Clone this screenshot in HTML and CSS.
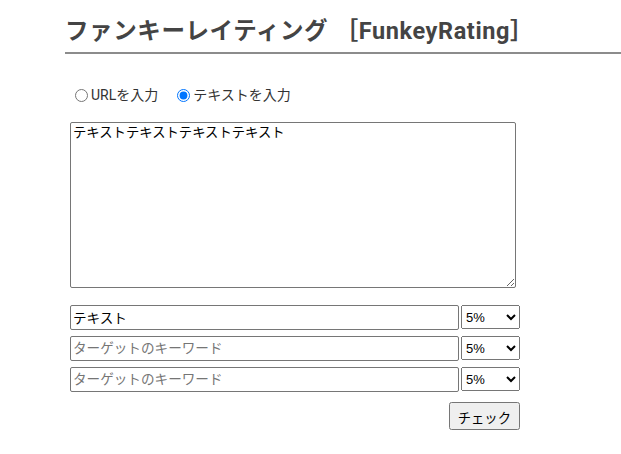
FILE: index.html
```html
<!DOCTYPE html>
<html lang="ja">
  <head>
    <meta charset="UTF-8" />
    <meta name="viewport" content="width=device-width, initial-scale=1.0" />
    <title>ファンキーレイティング</title>
    <link rel="stylesheet" href="styles.css">
  </head>
  <body>
    <div class="wrap">
      <h1>ファンキーレイティング ［FunkeyRating］</h1>

      <form class="rating-form">
        <div class="mode">
          <label><input type="radio" name="mode" value="url" />URLを入力</label>
          <label><input type="radio" name="mode" value="text" checked />テキストを入力</label>
        </div>

        <textarea class="source">テキストテキストテキストテキスト</textarea>

        <div class="keywords">
          <div class="kw-row">
            <input type="text" class="kw" value="テキスト" placeholder="ターゲットのキーワード" />
            <select class="pct">
              <option>5%</option><option>10%</option><option>15%</option>
            </select>
          </div>
          <div class="kw-row">
            <input type="text" class="kw" placeholder="ターゲットのキーワード" />
            <select class="pct">
              <option>5%</option><option>10%</option><option>15%</option>
            </select>
          </div>
          <div class="kw-row">
            <input type="text" class="kw" placeholder="ターゲットのキーワード" />
            <select class="pct">
              <option>5%</option><option>10%</option><option>15%</option>
            </select>
          </div>
        </div>

        <div class="actions">
          <button type="button" class="check">チェック</button>
        </div>
      </form>
    </div>
  </body>
</html>
```

FILE: styles.css
```css
body {
  margin: 0;
  font-family: Roboto, "Noto Sans CJK JP", sans-serif;
  color: #222;
  background: #fff;
}
.wrap {
  margin-left: 65px;
}
h1 {
  margin: 0;
  padding: 16px 0 6px;
  font-size: 23.5px;
  line-height: 30px;
  font-weight: bold;
  color: #444;
  border-bottom: 2px solid #8c8c8c;
  letter-spacing: 0.6px;
}
.rating-form {
  width: 455px;
  padding: 0 0 0 5px;
}
.mode {
  margin-top: 31px;
  font-size: 14px;
  line-height: 20px;
  display: flex;
  gap: 14px;
}
.mode label {
  display: flex;
  align-items: center;
  color: #333;
}
.mode input {
  margin: 0 3px 0 5px;
}
textarea.source {
  display: block;
  margin-top: 17px;
  width: 446px;
  height: 166px;
  box-sizing: border-box;
  font-family: Roboto, "Noto Sans CJK JP", sans-serif;
  font-size: 13.33px;
  line-height: 18px;
  padding: 1px 2px;
  border: 1px solid #767676;
  border-radius: 2px;
}
.keywords {
  margin-top: 17px;
  display: flex;
  flex-direction: column;
  gap: 6px;
}
.kw-row {
  display: flex;
  gap: 2px;
}
.kw {
  width: 389px;
  height: 25px;
  box-sizing: border-box;
  font-family: Roboto, "Noto Sans CJK JP", sans-serif;
  font-size: 13.6px;
  border: 1px solid #767676;
  border-radius: 2px;
  padding: 0 2px 2px;
}
.pct {
  width: 59px;
  height: 24px;
  font-size: 13px;
  font-family: Arial, "Noto Sans CJK JP", sans-serif;
}
.actions {
  margin-top: 10px;
  display: flex;
  justify-content: flex-end;
  width: 450px;
}
.check {
  font-size: 13.33px;
  font-family: Arial, "Noto Sans CJK JP", sans-serif;
  padding: 4px 7px;
  height: 28px;
}
```
